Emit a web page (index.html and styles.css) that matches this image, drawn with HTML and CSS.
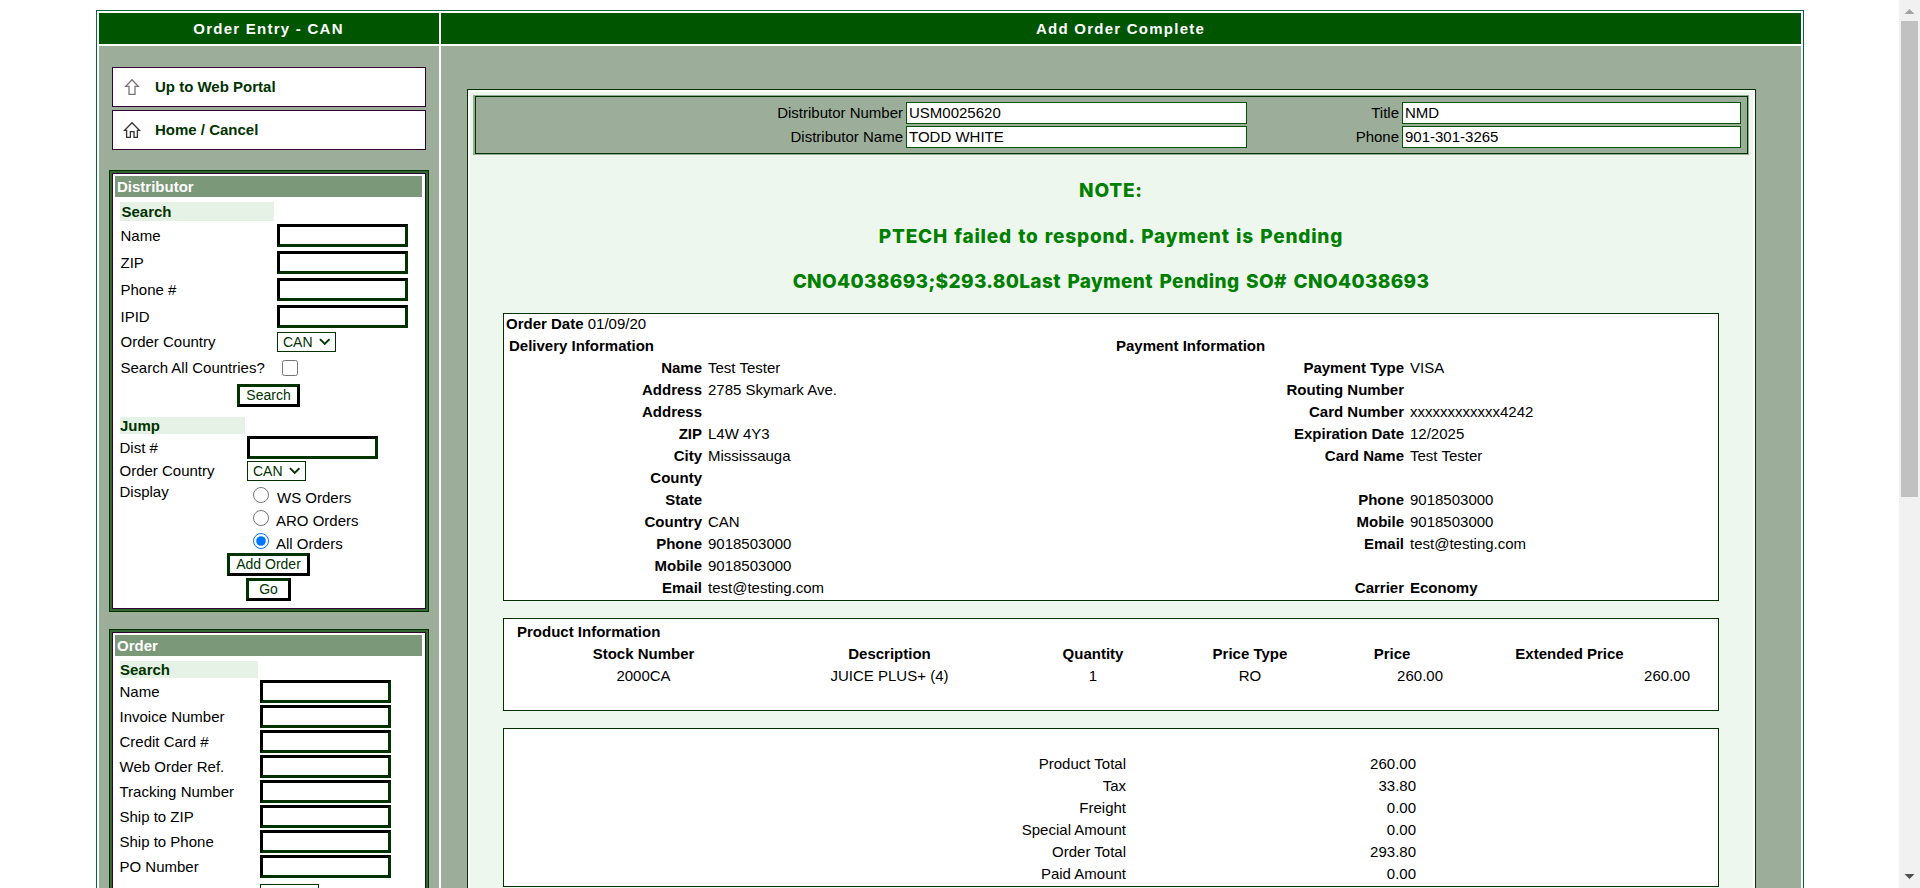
FILE: index.html
```html
<!DOCTYPE html>
<html lang="en">
<head>
<meta charset="utf-8">
<title>Order Entry - CAN</title>
<link rel="stylesheet" href="styles.css">
</head>
<body>
<div class="viewport">
<div class="page">
  <header class="head head-side">Order Entry - CAN</header>
  <header class="head">Add Order Complete</header>

  <aside class="side">
    <nav class="nav">
      <a class="nav-item">
        <svg class="nav-icon" width="18" height="18" viewBox="0 0 18 18" fill="none" stroke="#77727c" stroke-width="1.3"><path d="M9 1.8 15.2 8.3H12V16.4H6V8.3H2.8Z"/></svg>
        Up to Web Portal
      </a>
      <a class="nav-item">
        <svg class="nav-icon" width="18" height="18" viewBox="0 0 18 18" fill="none" stroke="#333" stroke-width="1.3"><path d="M9 1.8 16.4 9.3H14.4V16.4H11V10.6H7.4V16.4H3.6V9.3H1.6Z"/></svg>
        Home / Cancel
      </a>
    </nav>

    <section class="box box-dist"><div class="box-in">
      <h2 class="bar">Distributor</h2>
      <h3 class="strip strip-search">Search</h3>
      <div class="form form-search">
        <label>Name</label><input class="field">
        <label>ZIP</label><input class="field">
        <label>Phone #</label><input class="field">
        <label>IPID</label><input class="field">
        <label>Order Country</label><div class="select">CAN<svg width="12" height="8" viewBox="0 0 12 8" fill="none" stroke="#030" stroke-width="2"><path d="M1 1 6 6 11 1"/></svg></div>
        <label>Search All Countries?</label><input class="check" type="checkbox">
      </div>
      <div class="actions"><button class="btn btn-search">Search</button></div>
      <h3 class="strip strip-jump">Jump</h3>
      <div class="form form-jump">
        <label>Dist #</label><input class="field">
        <label>Order Country</label><div class="select">CAN<svg width="12" height="8" viewBox="0 0 12 8" fill="none" stroke="#030" stroke-width="2"><path d="M1 1 6 6 11 1"/></svg></div>
        <label class="lab-top">Display</label>
        <div class="radios">
          <label class="radio radio-ws"><input type="radio" name="display"><span>WS Orders</span></label>
          <label class="radio"><input type="radio" name="display"><span>ARO Orders</span></label>
          <label class="radio"><input type="radio" name="display" checked><span>All Orders</span></label>
        </div>
      </div>
      <div class="actions actions-jump">
        <button class="btn btn-add">Add Order</button>
        <button class="btn btn-go">Go</button>
      </div>
    </div></section>

    <section class="box box-order"><div class="box-in">
      <h2 class="bar">Order</h2>
      <h3 class="strip strip-order">Search</h3>
      <div class="form form-order">
        <label>Name</label><input class="field">
        <label>Invoice Number</label><input class="field">
        <label>Credit Card #</label><input class="field">
        <label>Web Order Ref.</label><input class="field">
        <label>Tracking Number</label><input class="field">
        <label>Ship to ZIP</label><input class="field">
        <label>Ship to Phone</label><input class="field">
        <label>PO Number</label><input class="field">
        <label></label><div class="select"></div>
      </div>
    </div></section>
  </aside>

  <main class="main">
    <div class="panel">
      <div class="ident"><div class="ident-in">
        <span class="id-lab">Distributor Number</span><span class="id-val">USM0025620</span>
        <span class="id-lab">Title</span><span class="id-val">NMD</span>
        <span class="id-lab">Distributor Name</span><span class="id-val">TODD WHITE</span>
        <span class="id-lab">Phone</span><span class="id-val">901-301-3265</span>
      </div></div>

      <div class="note">
        <p class="note-head">NOTE:</p>
        <p class="note-reason">PTECH failed to respond. Payment is Pending</p>
        <p class="note-order">CNO4038693;$293.80Last Payment Pending SO# CNO4038693</p>
      </div>

      <section class="card card-info">
        <div class="date"><b>Order Date</b> 01/09/20</div>
        <div class="info">
          <div class="info-col">
            <b class="info-title">Delivery Information</b>
            <b>Name</b><span>Test Tester</span>
            <b>Address</b><span>2785 Skymark Ave.</span>
            <b>Address</b><span></span>
            <b>ZIP</b><span>L4W 4Y3</span>
            <b>City</b><span>Mississauga</span>
            <b>County</b><span></span>
            <b>State</b><span></span>
            <b>Country</b><span>CAN</span>
            <b>Phone</b><span>9018503000</span>
            <b>Mobile</b><span>9018503000</span>
            <b>Email</b><span>test@testing.com</span>
          </div>
          <div class="info-col info-pay">
            <b class="info-title">Payment Information</b>
            <b>Payment Type</b><span>VISA</span>
            <b>Routing Number</b><span></span>
            <b>Card Number</b><span>xxxxxxxxxxxx4242</span>
            <b>Expiration Date</b><span>12/2025</span>
            <b>Card Name</b><span>Test Tester</span>
            <b></b><span></span>
            <b>Phone</b><span>9018503000</span>
            <b>Mobile</b><span>9018503000</span>
            <b>Email</b><span>test@testing.com</span>
            <b></b><span></span>
            <b>Carrier</b><span><b>Economy</b></span>
          </div>
        </div>
      </section>

      <section class="card card-products">
        <b class="prod-title">Product Information</b>
        <div class="prod">
          <b>Stock Number</b><b>Description</b><b>Quantity</b><b>Price Type</b><b>Price</b><b>Extended Price</b>
          <span>2000CA</span><span>JUICE PLUS+ (4)</span><span>1</span><span>RO</span><span class="price">260.00</span><span class="ext">260.00</span>
        </div>
      </section>

      <section class="card card-totals">
        <span>Product Total</span><span>260.00</span>
        <span>Tax</span><span>33.80</span>
        <span>Freight</span><span>0.00</span>
        <span>Special Amount</span><span>0.00</span>
        <span>Order Total</span><span>293.80</span>
        <span>Paid Amount</span><span>0.00</span>
      </section>
    </div>
  </main>
</div>
<div class="scroll">
  <svg width="11" height="21" viewBox="0 0 11 21"><path d="M.5 14 5.5 9 10.5 14Z" fill="#a3a3a3"/></svg>
  <div class="thumb"></div>
  <svg class="down" width="11" height="21" viewBox="0 0 11 21"><path d="M.5 7 5.5 12 10.5 7Z" fill="#505050"/></svg>
</div>
</div>
</body>
</html>
```

FILE: styles.css
```css
* { box-sizing: border-box; }
body { margin: 0; background: #fff; font: 15px/22px "Liberation Sans", Arial, sans-serif; color: #000; overflow: hidden; }
h2, h3, p { margin: 0; font-size: 15px; }
.viewport { display: flex; justify-content: space-between; height: 888px; overflow: hidden; }

.page { width: 1708px; height: 960px; margin: 10px 0 0 96px; padding: 2px; border: 1px solid #006640; display: grid; grid-template: 31px 1fr / 340px 1fr; gap: 2px; }
.head { background: #050; color: #fff; font-weight: bold; letter-spacing: 1.25px; line-height: 31px; text-align: center; padding-right: 1px; }
.side, .main { background: #9cae9a; min-width: 0; }

/* sidebar */
.side { padding: 21px 10px 0; }
.nav { display: flex; flex-direction: column; gap: 3px; margin: 0 3px 20px; }
.nav-item { display: flex; align-items: center; height: 40px; padding: 0 0 0 10px; gap: 14px; background: #fff; border: 1px solid #303; color: #030; font-weight: bold; }
.box { border: 1px solid #030; padding: 2px; background: #363; }
.box-in { border: 1px solid #303; background: #fff; height: 100%; padding: 2px 3px 0 2px; }
.box-dist { height: 442px; margin-bottom: 17px; }
.box-order { height: 340px; }
.bar { height: 21px; padding-left: 2px; background: #7b9879; color: #fff; line-height: 21px; }
.strip { background: #e6f2e6; color: #030; margin: 5px 0 1px 5px; height: 17px; line-height: 17px; }
.strip-search { width: 154px; height: 19px; line-height: 20px; padding-left: 1.5px; }
.strip-jump { width: 125px; margin-top: 10px; }
.strip-order { width: 138px; }
.form { display: grid; align-items: center; justify-items: start; margin-left: 4.5px; }
.form-search { grid-template: repeat(4, 27px) 24px 28px / 156.5px 1fr; padding-left: 1px; }
.form-jump { grid-template: 25px 22px 71px / 127.5px 1fr; }
.form-order { grid-template: repeat(8, 25px) 30px / 140.5px 1fr; }
.field { width: 131px; height: 23px; background: #fff; border: 3px solid; border-color: #000 #030 #030 #000; padding: 0; }
.select { display: flex; align-items: center; width: 59px; height: 20px; border: 1px solid #030; padding: 0 5px; gap: 6px; font-size: 14px; color: #030; background: #fff; }
.check { width: 16px; height: 16px; margin: 0 0 0 5px; }
.lab-top { align-self: start; line-height: 20px; }
.radios { align-self: start; padding: 2px 0 0 6px; }
.radio { display: flex; height: 23px; gap: 7px; }
.radio-ws { gap: 8px; }
.radio input { width: 16px; height: 16px; margin: 3px 0 0; }
.radio span { padding-top: 3px; }
.actions { display: flex; flex-direction: column; align-items: center; gap: 2px; padding-top: 2px; }
.actions-jump { padding-top: 0; }
.btn { height: 23px; padding: 0; background: #fff; color: #030; font: 14px/17px "Liberation Sans", Arial, sans-serif; border: 3px solid; border-color: #030 #000 #000 #030; }
.btn-search { width: 63px; }
.btn-add { width: 83px; }
.btn-go { width: 45px; }

/* main column */
.main { padding: 43px 45px 0 26px; }
.panel { height: 900px; border: 1px solid #030; background: #eef7ee; box-shadow: inset 0 0 0 2px #fff; padding: 5px 6px 0 5px; }
.ident { height: 60px; padding: 1px 1px 1px 2px; background: #9cae9a; box-shadow: inset 0 0 0 1px #93ab91; }
.ident-in { height: 58px; border: 1px solid #030; display: grid; grid-template: 22px 22px / 1fr 341px 155px 339px; row-gap: 2px; padding: 5px 6px 0 0; }
.id-lab { text-align: right; padding-right: 3px; }
.id-val { background: #fff; border: 1px solid #050; padding-left: 2px; line-height: 20px; }
.note { height: 158px; padding-top: 25px; text-align: center; color: #008000; font-family: Inter, "Liberation Sans", sans-serif; font-weight: 800; }
.note p { font-size: 19px; line-height: 22px; margin-bottom: 23.5px; }
.note-head { letter-spacing: .8px; }
.note-reason { letter-spacing: .8px; word-spacing: 1.3px; }
.note-order { letter-spacing: .35px; word-spacing: 2.2px; }
.card { margin: 0 30px 17px; background: #fff; border: 1px solid #030; }
.card-info { height: 288px; }
.date { padding-left: 2px; height: 22px; line-height: 20px; }
.info { display: grid; grid-template-columns: 607px 607px; line-height: 20px; }
.info-col { display: grid; grid-template-columns: 198px 1fr; grid-auto-rows: 22px; column-gap: 6px; align-content: start; }
.info-pay { grid-template-columns: 293px 1fr; }
.info-col > b { text-align: right; }
.info-col > .info-title { grid-column: 1 / 3; text-align: left; padding-left: 5px; }
.card-products { height: 93px; padding-top: 2px; }
.prod-title { display: block; padding-left: 13px; }
.prod { display: grid; grid-template-columns: 219px 273px 134px 180px 104px 251px; grid-auto-rows: 22px; margin-left: 30px; text-align: center; }
.prod .price { text-align: right; padding-right: 1px; }
.prod .ext { text-align: right; padding-right: 5px; }
.card-totals { height: 159px; padding-top: 24px; display: grid; grid-template-columns: 622px 290px; grid-auto-rows: 22px; text-align: right; }

/* window scrollbar */
.scroll { width: 21px; height: 888px; background: #f1f1f1; display: flex; flex-direction: column; align-items: center; }
.thumb { width: 17px; height: 476px; background: #c1c1c1; }
.down { margin-top: auto; }
```
